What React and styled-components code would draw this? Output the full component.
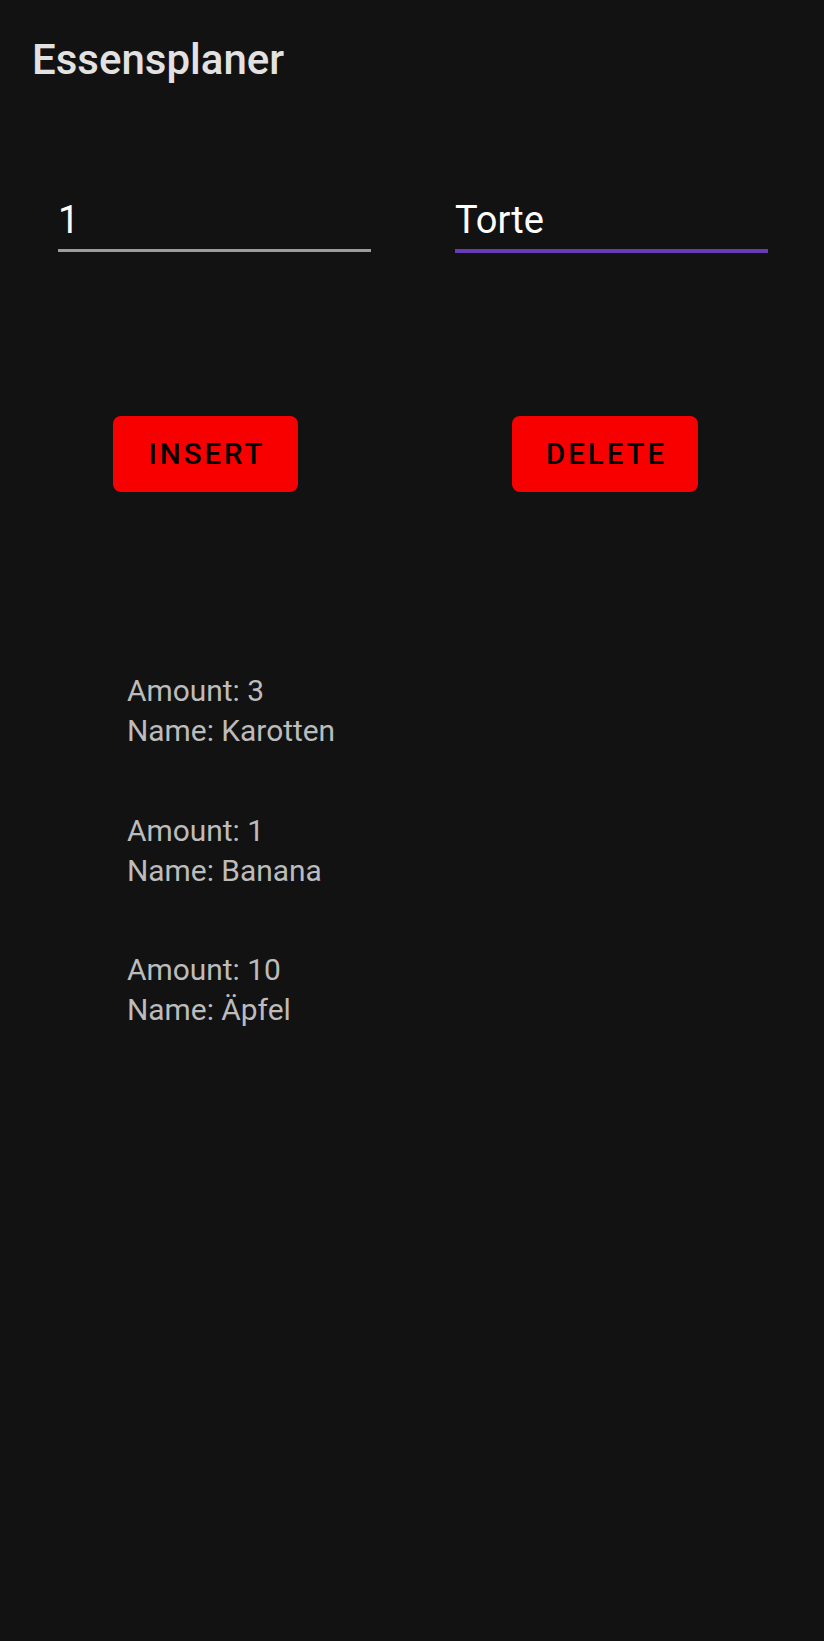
import React, { useState } from "react";
import styled, { createGlobalStyle } from "styled-components";

const GlobalStyle = createGlobalStyle`
  body {
    margin: 0;
    background: #121212;
    font-family: Roboto, "Noto Sans", sans-serif;
  }
`;

const Screen = styled.div`
  min-height: 1641px;
  background: #121212;
`;

const Title = styled.h1`
  margin: 0;
  padding: 32px 0 0 32px;
  font-size: 42px;
  font-weight: 500;
  line-height: 56px;
  color: #e2e2e2;
`;

const InputRow = styled.div`
  display: flex;
  align-items: flex-start;
  gap: 84px;
  padding-left: 58px;
  margin-top: 107px;
`;

const TextInput = styled.input`
  box-sizing: content-box;
  width: 313px;
  height: 50px;
  padding: 0 0 4px;
  margin: 0;
  border: none;
  border-bottom: ${(p) => (p.$focused ? "4px solid #673ab7" : "3px solid #9c9c9c")};
  background: transparent;
  color: #ffffff;
  font-family: Roboto, sans-serif;
  font-size: 38px;
  line-height: 50px;
  outline: none;
`;

const ButtonRow = styled.div`
  display: flex;
  gap: 214px;
  padding-left: 113px;
  margin-top: 163px;
`;

const Button = styled.button`
  box-sizing: border-box;
  min-width: 185px;
  height: 76px;
  padding: 0 31px 0 34px;
  border: none;
  border-radius: 8px;
  background: #f80000;
  color: #000;
  font-family: Roboto, sans-serif;
  font-size: 29.4px;
  font-weight: 500;
  letter-spacing: 3px;
  text-transform: uppercase;
`;

const List = styled.div`
  display: flex;
  flex-direction: column;
  gap: 59.5px;
  padding-left: 127px;
  margin-top: 179px;
`;

const Item = styled.div`
  font-size: 29.9px;
  line-height: 40px;
  color: #bcbcbc;
`;

const items = [
  { amount: 3, name: "Karotten" },
  { amount: 1, name: "Banana" },
  { amount: 10, name: "Äpfel" },
];

const App = () => {
  const [amount, setAmount] = useState("1");
  const [name, setName] = useState("Torte");

  return (
    <Screen>
      <GlobalStyle />
      <Title>Essensplaner</Title>
      <InputRow>
        <TextInput value={amount} onChange={(e) => setAmount(e.target.value)} />
        <TextInput $focused value={name} onChange={(e) => setName(e.target.value)} />
      </InputRow>
      <ButtonRow>
        <Button>Insert</Button>
        <Button>Delete</Button>
      </ButtonRow>
      <List>
        {items.map((item) => (
          <Item key={item.name}>
            <div>Amount: {item.amount}</div>
            <div>Name: {item.name}</div>
          </Item>
        ))}
      </List>
    </Screen>
  );
};

export default App;
